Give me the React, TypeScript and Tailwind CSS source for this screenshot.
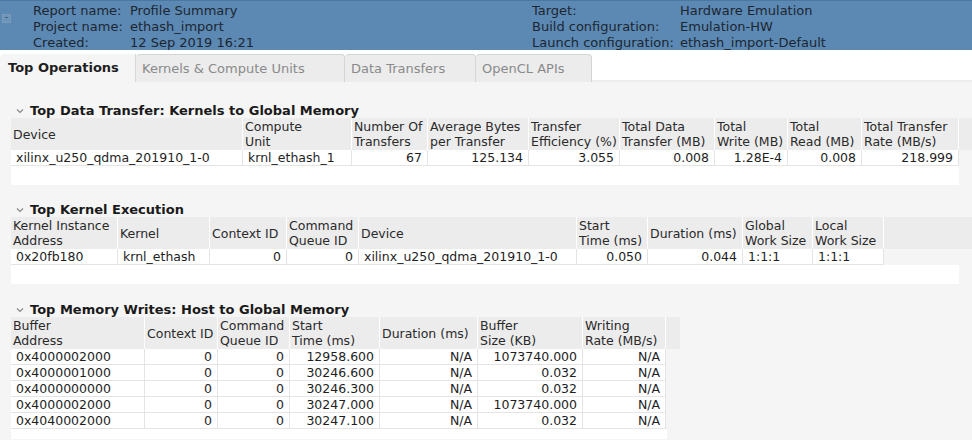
import React from "react";

type Col = { h: string[]; w: number; align?: "r" | "l" | "c"; hAlign?: "c" };

function Table({ cols, rows, fill, blank }: { cols: Col[]; rows: string[][]; fill?: boolean; blank: number }) {
  return (
    <div className="ml-[11px]">
      <div className="flex bg-[#ececec] h-[32px]">
        {cols.map((c, i) => (
          <div key={i} style={{ width: c.w }} className="shrink-0 border-r border-white px-[2px] flex flex-col justify-center leading-[15px] text-[#2a2a2a]">
            {c.h.map((t, j) => (
              <div key={j} className={c.hAlign === "c" ? "text-center" : ""}>{t}</div>
            ))}
          </div>
        ))}
        {fill && <div className="flex-1" />}
      </div>
      {rows.map((r, ri) => (
        <div key={ri} className="flex h-[16px] leading-[16px]">
          {cols.map((c, i) => (
            <div key={i} style={{ width: c.w }} className={`shrink-0 bg-white border-r border-b border-[#e4e4e4] px-[5px] whitespace-nowrap overflow-hidden ${c.align === "r" ? "text-right" : ""}`}>
              {r[i]}
            </div>
          ))}
        </div>
      ))}
      <div style={{ height: blank }} className="bg-white mr-[13px]" />
    </div>
  );
}

function Title({ t }: { t: string }) {
  return (
    <div className="flex items-center h-[14px] pl-[15px] font-bold text-[13px] text-[#1a1a1a]">
      <svg width="10" height="10" viewBox="0 0 10 10" className="mr-[5px]"><path d="M2 3.5 L5 6.5 L8 3.5" stroke="#888" strokeWidth="1.2" fill="none" /></svg>
      {t}
    </div>
  );
}

export default function App() {
  const font = { fontFamily: '"DejaVu Sans", Verdana, sans-serif' };
  return (
    <div style={font} className="w-[972px] h-[440px] overflow-hidden bg-[#f5f5f5] text-[12.5px] text-[#1e1e1e]">
      <div className="h-[50px] bg-[#5b89b3] border-t border-[#4a78a0] flex text-[13px] text-[#1d2630] leading-[16px] pt-[2px] relative">
        <div className="absolute left-[2px] top-[13px] w-[9px] h-[9px] border border-[#7a9bb8] bg-[#6e95ba] text-[8px] leading-[6px] text-center text-[#333]">-</div>
        <div className="w-[532px] pl-[33px] flex">
          <div className="w-[97px]"><div>Report name:</div><div>Project name:</div><div>Created:</div></div>
          <div><div>Profile Summary</div><div>ethash_import</div><div>12 Sep 2019 16:21</div></div>
        </div>
        <div className="flex">
          <div className="w-[148px]"><div>Target:</div><div>Build configuration:</div><div>Launch configuration:</div></div>
          <div><div>Hardware Emulation</div><div>Emulation-HW</div><div>ethash_import-Default</div></div>
        </div>
      </div>
      <div className="flex h-[32px] pt-[4px] bg-white text-[13px]">
        <div className="w-[136px] bg-[#f5f5f5] font-bold pl-[8px] flex items-center border-r border-[#d8d8d8] rounded-tl-sm">Top Operations</div>
        {[["Kernels & Compute Units", 209], ["Data Transfers", 131], ["OpenCL APIs", 116]].map(([t, w]) => (
          <div key={t as string} style={{ width: w as number }} className="bg-[#ececec] text-[#8a8a8a] pl-[6px] flex items-center border-r border-t border-[#d4d4d4] rounded-t-sm">{t}</div>
        ))}
        <div className="flex-1 bg-[#ececec] mt-[26px]" />
      </div>
      <div className="pt-[22px]">
        <Title t="Top Data Transfer: Kernels to Global Memory" />
        <Table
          fill
          blank={19}
          cols={[
            { h: ["Device"], w: 232 },
            { h: ["Compute", "Unit"], w: 109, align: "l" },
            { h: ["Number Of", "Transfers"], w: 76, align: "r" },
            { h: ["Average Bytes", "per Transfer"], w: 101, align: "r" },
            { h: ["Transfer", "Efficiency (%)"], w: 91, align: "r" },
            { h: ["Total Data", "Transfer (MB)"], w: 95, align: "r" },
            { h: ["Total", "Write (MB)"], w: 73, align: "r" },
            { h: ["Total", "Read (MB)"], w: 74, align: "r" },
            { h: ["Total Transfer", "Rate (MB/s)"], w: 97, align: "r" },
          ]}
          rows={[["xilinx_u250_qdma_201910_1-0", "krnl_ethash_1", "67", "125.134", "3.055", "0.008", "1.28E-4", "0.008", "218.999"]]}
        />
        <div className="h-[18px]" />
        <Title t="Top Kernel Execution" />
        <Table
          fill
          blank={19}
          cols={[
            { h: ["Kernel Instance", "Address"], w: 107 },
            { h: ["Kernel"], w: 92 },
            { h: ["Context ID"], w: 77, align: "r" },
            { h: ["Command", "Queue ID"], w: 72, align: "r" },
            { h: ["Device"], w: 218 },
            { h: ["Start", "Time (ms)"], w: 71, align: "r" },
            { h: ["Duration (ms)"], w: 95, align: "r" },
            { h: ["Global", "Work Size"], w: 70 },
            { h: ["Local", "Work Size"], w: 71 },
          ]}
          rows={[["0x20fb180", "krnl_ethash", "0", "0", "xilinx_u250_qdma_201910_1-0", "0.050", "0.044", "1:1:1", "1:1:1"]]}
        />
        <div className="h-[19px]" />
        <Title t="Top Memory Writes: Host to Global Memory" />
        <div className="w-[680px]">
          <Table
            blank={10}
            cols={[
              { h: ["Buffer", "Address"], w: 134 },
              { h: ["Context ID"], w: 73, align: "r" },
              { h: ["Command", "Queue ID"], w: 72, align: "r" },
              { h: ["Start", "Time (ms)"], w: 90, align: "r" },
              { h: ["Duration (ms)"], w: 98, align: "r" },
              { h: ["Buffer", "Size (KB)"], w: 105, align: "r" },
              { h: ["Writing", "Rate (MB/s)"], w: 83, align: "r" },
            ]}
            rows={[
              ["0x4000002000", "0", "0", "12958.600", "N/A", "1073740.000", "N/A"],
              ["0x4000001000", "0", "0", "30246.600", "N/A", "0.032", "N/A"],
              ["0x4000000000", "0", "0", "30246.300", "N/A", "0.032", "N/A"],
              ["0x4000002000", "0", "0", "30247.000", "N/A", "1073740.000", "N/A"],
              ["0x4040002000", "0", "0", "30247.100", "N/A", "0.032", "N/A"],
            ]}
          />
        </div>
      </div>
    </div>
  );
}
